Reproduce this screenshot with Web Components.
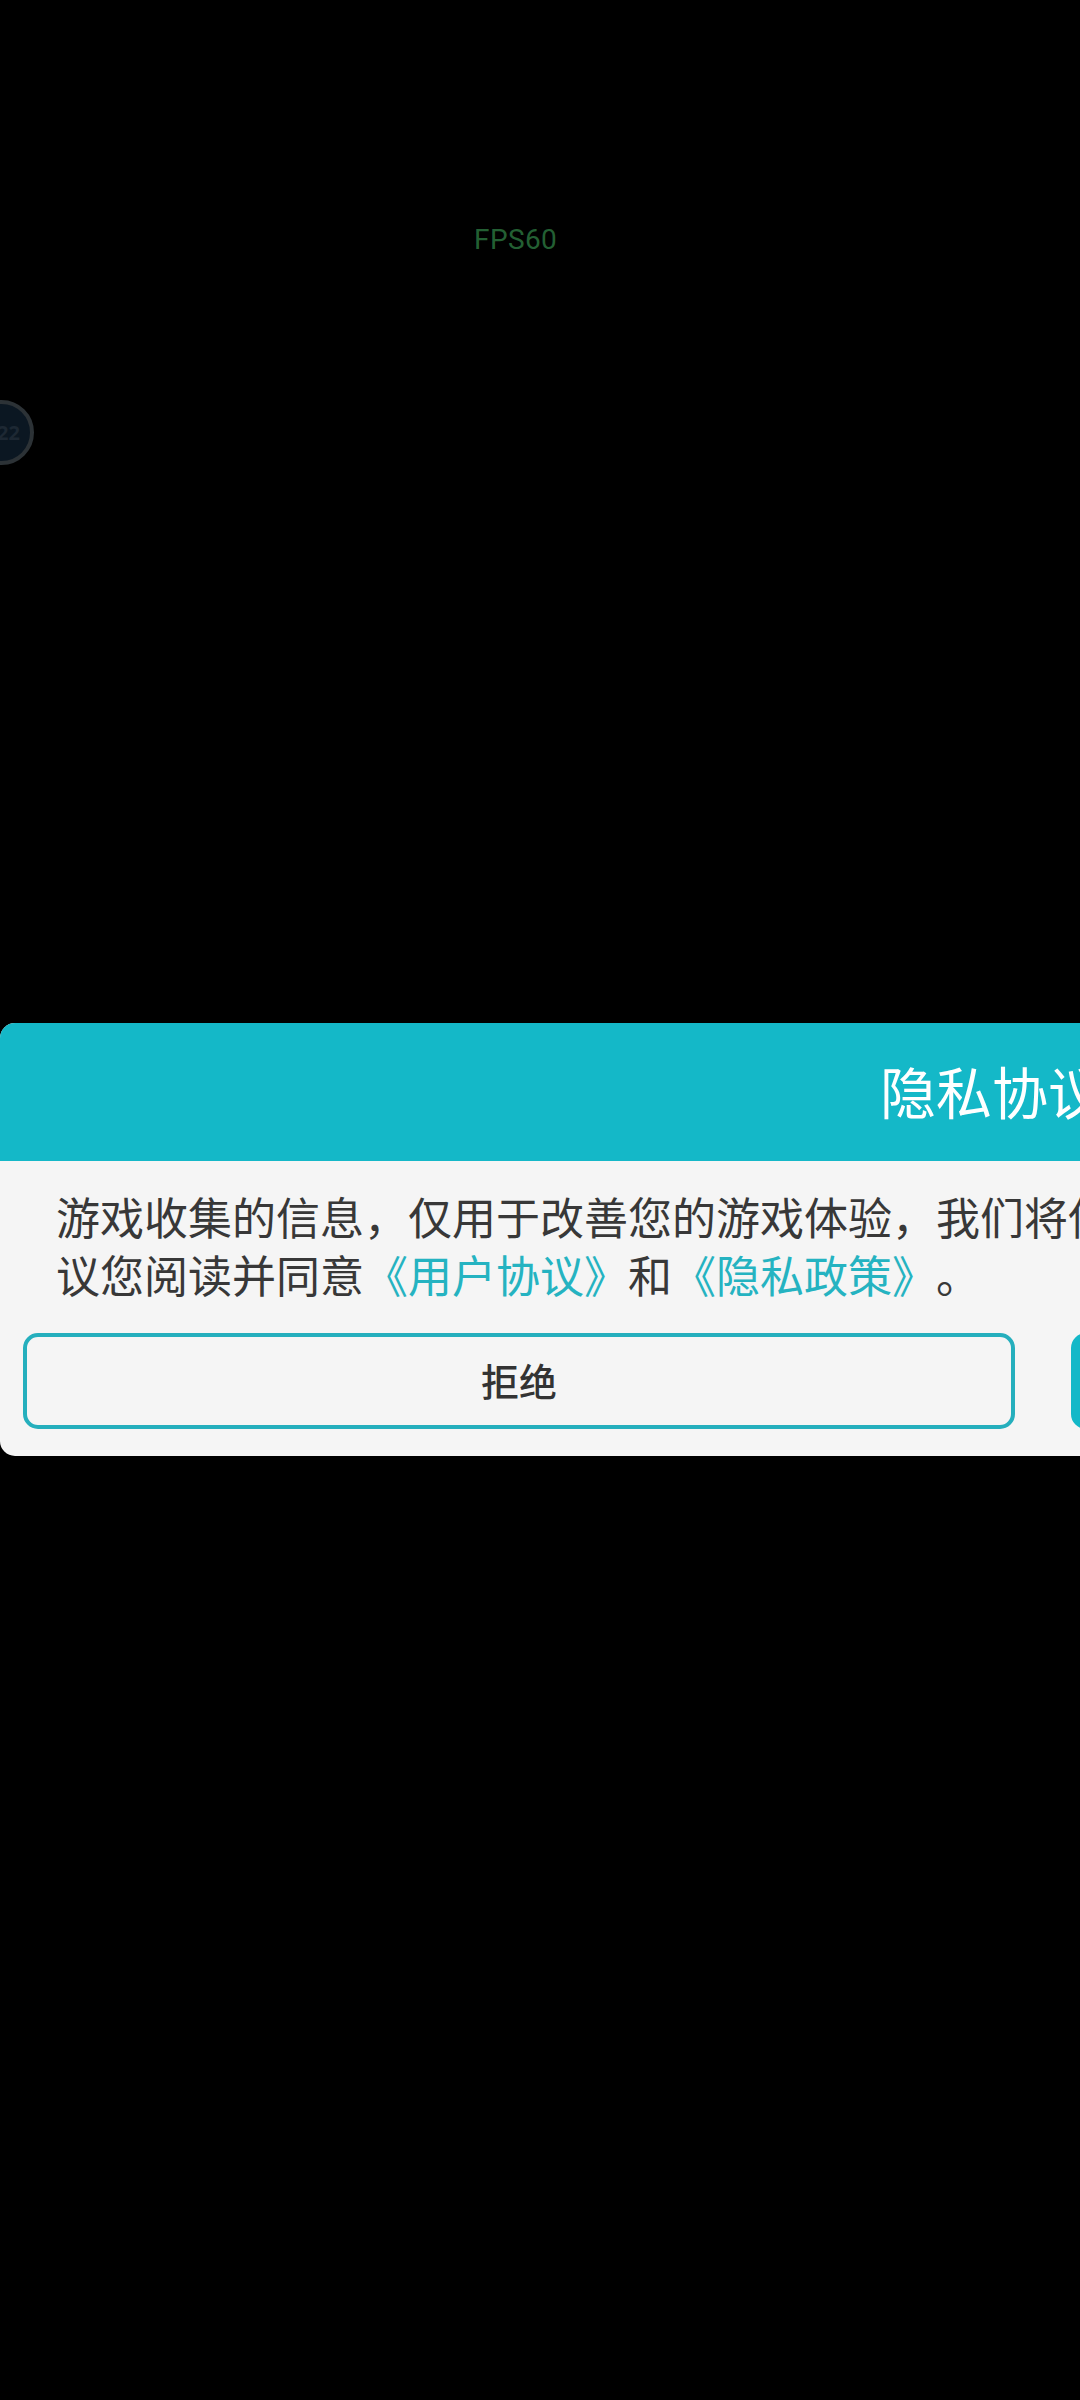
<!DOCTYPE html>
<html lang="zh"><head><meta charset="utf-8"><title>隐私协议</title>
<style>
html,body{margin:0;padding:0;background:#000;width:1080px;height:2400px;overflow:hidden;font-family:"Noto Sans CJK SC","Noto Sans",sans-serif}
</style></head><body>
<game-screen>
  <fps-label slot="overlay">FPS60</fps-label>
  <float-ball slot="overlay">22</float-ball>
  <privacy-dialog>
    <span slot="title">隐私协议</span>
    <span>游戏收集的信息，仅用于改善您的游戏体验，我们将使</span><br>
    <span>议您阅读并同意<policy-link>《用户协议》</policy-link>和<policy-link>《隐私政策》</policy-link>。</span>
    <dialog-button slot="actions">拒绝</dialog-button>
    <dialog-button slot="actions" primary></dialog-button>
  </privacy-dialog>
</game-screen>
<script>
function def(name,css,html){
  customElements.define(name,class extends HTMLElement{
    constructor(){super();this.attachShadow({mode:'open'}).innerHTML='<style>'+css+'</style>'+html;}
  });
}
def('game-screen',`
  :host{display:block;position:relative;width:1080px;height:2400px;overflow:hidden;background:#000;padding-top:1023px;box-sizing:border-box}
`,`<slot name="overlay"></slot><slot></slot>`);
def('fps-label',`
  :host{position:absolute;left:474px;top:221px;font:400 28px/38px Roboto,"Noto Sans",sans-serif;color:#235f33;letter-spacing:.4px}
`,`<slot></slot>`);
def('float-ball',`
  :host{position:absolute;left:-31px;top:400px;width:65px;height:65px;box-sizing:border-box;border:4px solid #2c3236;border-radius:50%;background:#0b1722;display:flex;align-items:center;justify-content:flex-end;padding-right:10px;font:700 20px/1 "Noto Sans",sans-serif;color:#1d2833}
`,`<slot></slot>`);
def('privacy-dialog',`
  :host{display:block;width:1984px;background:#f5f5f5;border-radius:15px;overflow:hidden}
  header{height:138px;box-sizing:border-box;padding-bottom:4px;background:#14b8c8;color:#fff;display:flex;align-items:center;justify-content:center;font-size:56px;line-height:1}
  .body{height:172px;box-sizing:border-box;padding:26px 0 0 56px;font-size:44px;line-height:58px;color:#383838;white-space:nowrap;text-spacing-trim:space-all}
  footer{display:flex;gap:56px;padding:0 0 27px 23px}
`,`<header><slot name="title"></slot></header><div class="body"><slot></slot></div><footer><slot name="actions"></slot></footer>`);
def('policy-link',`:host{display:inline;color:#25b3c1}`,`<slot></slot>`);
def('dialog-button',`
  :host{display:flex;flex:none;width:992px;height:96px;box-sizing:border-box;padding-bottom:3px;border:4px solid #25afbd;border-radius:15px;align-items:center;justify-content:center;font-size:38px;line-height:1;color:#333;font-weight:500}
  :host([primary]){background:#14b8c8;border-color:#14b8c8;color:#fff}
`,`<slot></slot>`);
</script>
</body></html>
